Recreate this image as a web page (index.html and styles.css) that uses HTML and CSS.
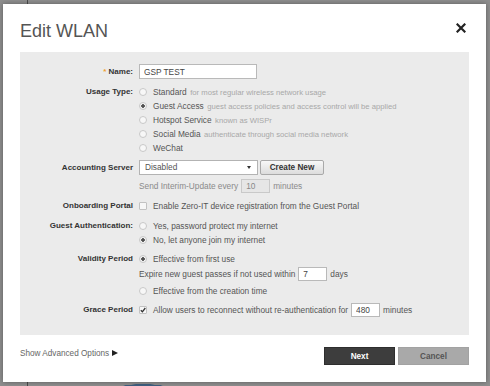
FILE: index.html
```html
<!DOCTYPE html>
<html lang="en">
<head>
    <meta charset="UTF-8">
    <meta name="viewport" content="width=device-width, initial-scale=1.0">
    <title>Edit WLAN</title>
    <link rel="stylesheet" href="styles.css">
</head>
<body>
    <div class="modal">
        <div class="modal-header">
            <h1>Edit WLAN</h1>
            <span class="close">
                <svg width="10" height="10" viewBox="0 0 10 10"><path d="M1.5 1.5 L8.5 8.5 M8.5 1.5 L1.5 8.5" stroke="#222" stroke-width="2.2" stroke-linecap="square"/></svg>
            </span>
        </div>

        <div class="form-panel">
            <div class="field tall">
                <label class="field-label"><span class="req">*</span> Name:</label>
                <div class="controls">
                    <input class="text-input name-input" type="text" value="GSP TEST">
                </div>
            </div>

            <div class="field">
                <label class="field-label">Usage Type:</label>
                <div class="controls">
                    <div class="line"><span class="radio"></span><span class="opt">Standard</span><span class="hint">for most regular wireless network usage</span></div>
                    <div class="line"><span class="radio checked"></span><span class="opt">Guest Access</span><span class="hint">guest access policies and access control will be applied</span></div>
                    <div class="line"><span class="radio"></span><span class="opt">Hotspot Service</span><span class="hint">known as WISPr</span></div>
                    <div class="line"><span class="radio"></span><span class="opt">Social Media</span><span class="hint">authenticate through social media network</span></div>
                    <div class="line"><span class="radio"></span><span class="opt">WeChat</span></div>
                </div>
            </div>

            <div class="field tall accounting">
                <label class="field-label">Accounting Server</label>
                <div class="controls">
                    <div class="line select-line">
                        <div class="select">Disabled<span class="caret"></span></div>
                        <button class="btn-create">Create New</button>
                    </div>
                    <div class="line interim">
                        <span class="opt muted">Send Interim-Update every</span>
                        <input class="text-input small-input" type="text" value="10" disabled>
                        <span class="opt muted">minutes</span>
                    </div>
                </div>
            </div>

            <div class="field">
                <label class="field-label">Onboarding Portal</label>
                <div class="controls">
                    <div class="line"><span class="checkbox"></span><span class="opt">Enable Zero-IT device registration from the Guest Portal</span></div>
                </div>
            </div>

            <div class="field">
                <label class="field-label">Guest Authentication:</label>
                <div class="controls">
                    <div class="line"><span class="radio"></span><span class="opt">Yes, password protect my internet</span></div>
                    <div class="line"><span class="radio checked"></span><span class="opt">No, let anyone join my internet</span></div>
                </div>
            </div>

            <div class="field validity">
                <label class="field-label">Validity Period</label>
                <div class="controls">
                    <div class="line"><span class="radio checked"></span><span class="opt">Effective from first use</span></div>
                    <div class="line expire">
                        <span class="opt">Expire new guest passes if not used within</span>
                        <input class="text-input small-input" type="text" value="7">
                        <span class="opt">days</span>
                    </div>
                    <div class="line creation"><span class="radio"></span><span class="opt">Effective from the creation time</span></div>
                </div>
            </div>

            <div class="field">
                <label class="field-label">Grace Period</label>
                <div class="controls">
                    <div class="line">
                        <span class="checkbox checked">
                            <svg width="6" height="6" viewBox="0 0 6 6"><path d="M0.8 3.2 L2.4 4.8 L5.3 1" stroke="#333" stroke-width="1.3" fill="none"/></svg>
                        </span>
                        <span class="opt">Allow users to reconnect without re-authentication for</span>
                        <input class="text-input small-input" type="text" value="480">
                        <span class="opt">minutes</span>
                    </div>
                </div>
            </div>
        </div>

        <div class="modal-footer">
            <a class="advanced">Show Advanced Options <span class="arrow"></span></a>
            <div class="actions">
                <button class="btn btn-next">Next</button>
                <button class="btn btn-cancel">Cancel</button>
            </div>
        </div>
    </div>
</body>
</html>
```

FILE: styles.css
```css
body {
    margin: 0;
    height: 386px;
    overflow: hidden;
    background:
        radial-gradient(ellipse 34px 8px at 143px 392px, #3f5f80 96%, transparent 100%),
        linear-gradient(to right, transparent 27px, #4b4b4b 27px, #4b4b4b 28px, transparent 28px),
        #8e8e8e;
    font-family: "Liberation Sans", Arial, sans-serif;
}
.modal {
    margin: 4px 0 0 3px;
    width: 483px;
    height: 378px;
    box-sizing: border-box;
    padding: 16px 17px 0 17px;
    background: #fff;
    box-shadow: 0 0 5px rgba(0,0,0,0.35);
}
.modal-header {
    display: flex;
    justify-content: space-between;
    height: 22px;
    margin-bottom: 10px;
}
.modal-header h1 {
    margin: 0;
    font-size: 18px;
    font-weight: normal;
    line-height: 22px;
    color: #555;
}
.close {
    display: block;
    width: 10px;
    height: 10px;
    margin: 3px 3px 0 0;
}
.close svg {
    display: block;
}

/* form panel */
.form-panel {
    background: #ebebeb;
    padding: 12px 0 18px;
}
.field {
    display: grid;
    grid-template-columns: 113px 1fr;
    column-gap: 6px;
    margin-top: 6px;
}
.field:first-child {
    margin-top: 0;
}
.field.accounting {
    margin-top: 5px;
}
.field.validity {
    margin-top: 5px;
}
.field.validity + .field {
    margin-top: 5px;
}
.field-label {
    text-align: right;
    font-size: 8px;
    font-weight: bold;
    color: #333;
    line-height: 14px;
    white-space: nowrap;
}
.field.tall .field-label {
    line-height: 15px;
}
.req {
    color: #f0a030;
}
.controls {
    display: flex;
    flex-direction: column;
}
.line {
    display: flex;
    align-items: center;
    height: 14px;
    white-space: nowrap;
}
.select-line {
    height: 15px;
}
.interim {
    margin-top: 4px;
}
.expire {
    margin-top: 1px;
}
.creation {
    margin-top: 3px;
}
.opt {
    font-size: 8.3px;
    color: #555;
}
.opt.muted {
    color: #8a8a8a;
}
.hint {
    font-size: 7.7px;
    color: #a8a8a8;
    margin-left: 3.5px;
}

/* radios and checkboxes */
.radio {
    flex: none;
    width: 6px;
    height: 6px;
    border: 1px solid #c8c8c8;
    border-radius: 50%;
    background: #f7f7f7;
    margin-right: 6px;
}
.radio.checked {
    background: radial-gradient(circle, #505050 0 1.5px, #f4f4f4 2.1px);
}
.checkbox {
    flex: none;
    display: flex;
    align-items: center;
    justify-content: center;
    width: 6px;
    height: 6px;
    border: 1px solid #c2c2c2;
    border-radius: 1px;
    background: #f7f7f7;
    margin-right: 6px;
}
.checkbox svg {
    display: block;
}

/* inputs */
.text-input {
    box-sizing: border-box;
    height: 14px;
    margin: 0 3px;
    padding: 0 4px;
    border: 1px solid #b9b9b9;
    background: #fff;
    font-family: "Liberation Sans", Arial, sans-serif;
    font-size: 8.3px;
    color: #444;
    outline: none;
}
.name-input {
    width: 118px;
    height: 15px;
    margin: 0;
}
.small-input {
    width: 29px;
}
.small-input:disabled {
    background: #e6e6e6;
    border-color: #c9c9c9;
    color: #888;
}
.select {
    position: relative;
    box-sizing: border-box;
    width: 119px;
    height: 15px;
    padding-left: 5px;
    border: 1px solid #b3b3b3;
    background: #fff;
    font-size: 8.3px;
    line-height: 13px;
    color: #555;
}
.caret {
    position: absolute;
    right: 6px;
    top: 5px;
    border-left: 2px solid transparent;
    border-right: 2px solid transparent;
    border-top: 3px solid #333;
}
.btn-create {
    box-sizing: border-box;
    width: 64px;
    height: 15px;
    margin-left: 2px;
    padding: 0;
    border: 1px solid #a9a9a9;
    border-radius: 2px;
    background: linear-gradient(#f8f8f8, #dcdcdc);
    font-family: "Liberation Sans", Arial, sans-serif;
    font-size: 8.2px;
    font-weight: bold;
    color: #333;
}

/* footer */
.modal-footer {
    display: flex;
    justify-content: space-between;
    margin-top: 12px;
}
.advanced {
    display: flex;
    align-items: center;
    height: 12px;
    font-size: 8.2px;
    color: #666;
}
.arrow {
    display: inline-block;
    margin-left: 3px;
    border-top: 3.5px solid transparent;
    border-bottom: 3.5px solid transparent;
    border-left: 6px solid #222;
}
.actions {
    display: flex;
    gap: 3px;
}
.btn {
    box-sizing: border-box;
    width: 71px;
    height: 18px;
    padding: 0;
    border: 1px solid transparent;
    font-family: "Liberation Sans", Arial, sans-serif;
    font-size: 8.2px;
    font-weight: bold;
}
.btn-next {
    background: #3d3d3d;
    border-color: #2e2e2e;
    color: #fff;
}
.btn-cancel {
    background: #a9a9a9;
    border-color: #a2a2a2;
    color: #555;
}
```
